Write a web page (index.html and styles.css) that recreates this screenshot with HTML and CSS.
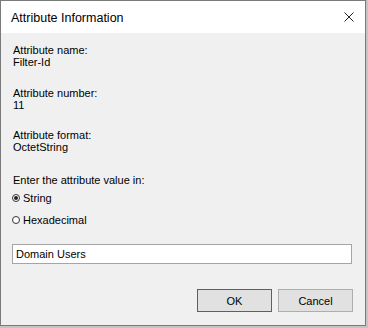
FILE: index.html
```html
<!DOCTYPE html>
<html lang="en">
<head>
  <meta charset="UTF-8" />
  <title>Attribute Information</title>
  <link rel="stylesheet" href="styles.css">
</head>
<body>
  <div class="window">
    <div class="titlebar">
      <span class="title">Attribute Information</span>
      <svg class="close" width="10" height="10" viewBox="0 0 10 10">
        <path d="M0.5 0.5 L9.5 9.5 M9.5 0.5 L0.5 9.5" stroke="#222" stroke-width="1" fill="none"/>
      </svg>
    </div>

    <div class="content">
      <div class="field">
        <div>Attribute name:</div>
        <div>Filter-Id</div>
      </div>
      <div class="field">
        <div>Attribute number:</div>
        <div>11</div>
      </div>
      <div class="field">
        <div>Attribute format:</div>
        <div>OctetString</div>
      </div>

      <div class="prompt">Enter the attribute value in:</div>
      <label class="radio first"><span class="dot checked"></span>String</label>
      <label class="radio"><span class="dot"></span>Hexadecimal</label>

      <input class="value" type="text" value="Domain Users" />

      <div class="buttons">
        <button class="btn default">OK</button>
        <button class="btn">Cancel</button>
      </div>
    </div>
  </div>
</body>
</html>
```

FILE: styles.css
```css
body {
  margin: 0;
  background-color: #c4c4c4;
  font-family: 'Liberation Sans', Arial, sans-serif;
  font-size: 11px;
  color: #000;
}

.window {
  width: 364px;
  height: 324px;
  border: 1px solid #7a7a7a;
  background-color: #f0f0f0;
  display: flex;
  flex-direction: column;
}

.titlebar {
  height: 32px;
  background-color: #fff;
  display: flex;
  align-items: center;
  padding-left: 10px;
  padding-top: 1px;
  box-sizing: border-box;
}

.title {
  font-size: 12.5px;
}

.close {
  margin-left: auto;
  margin-right: 11px;
  margin-top: -1px;
}

.content {
  padding: 11px 12px 0 12px;
  display: flex;
  flex-direction: column;
}

.field {
  line-height: 12px;
  margin-bottom: 18.5px;
}

.prompt {
  line-height: 12px;
  margin-top: 2.5px;
}

.radio {
  display: flex;
  align-items: center;
  line-height: 12px;
  margin-top: 10px;
}

.radio.first {
  margin-top: 6px;
}

.dot {
  width: 6px;
  height: 6px;
  border: 1px solid #333;
  border-radius: 50%;
  margin-left: -1px;
  margin-right: 3px;
  display: flex;
  align-items: center;
  justify-content: center;
  background-color: #fff;
}

.dot.checked::after {
  content: "";
  width: 4px;
  height: 4px;
  border-radius: 50%;
  background-color: #222;
}

.value {
  margin: 18px 0 0 -1px;
  width: 340px;
  height: 20px;
  box-sizing: border-box;
  border: 1px solid #a5a5a5;
  padding: 0 3px;
  font-family: inherit;
  font-size: 11px;
  color: #000;
  background-color: #fff;
}

.buttons {
  display: flex;
  justify-content: flex-end;
  gap: 6px;
  margin-top: 25px;
}

.btn {
  width: 75px;
  height: 23px;
  border: 1px solid #adadad;
  background-color: #e1e1e1;
  font-family: inherit;
  font-size: 11px;
  color: #000;
  padding: 0;
}

.btn.default {
  border-color: #0078d7;
}
```
